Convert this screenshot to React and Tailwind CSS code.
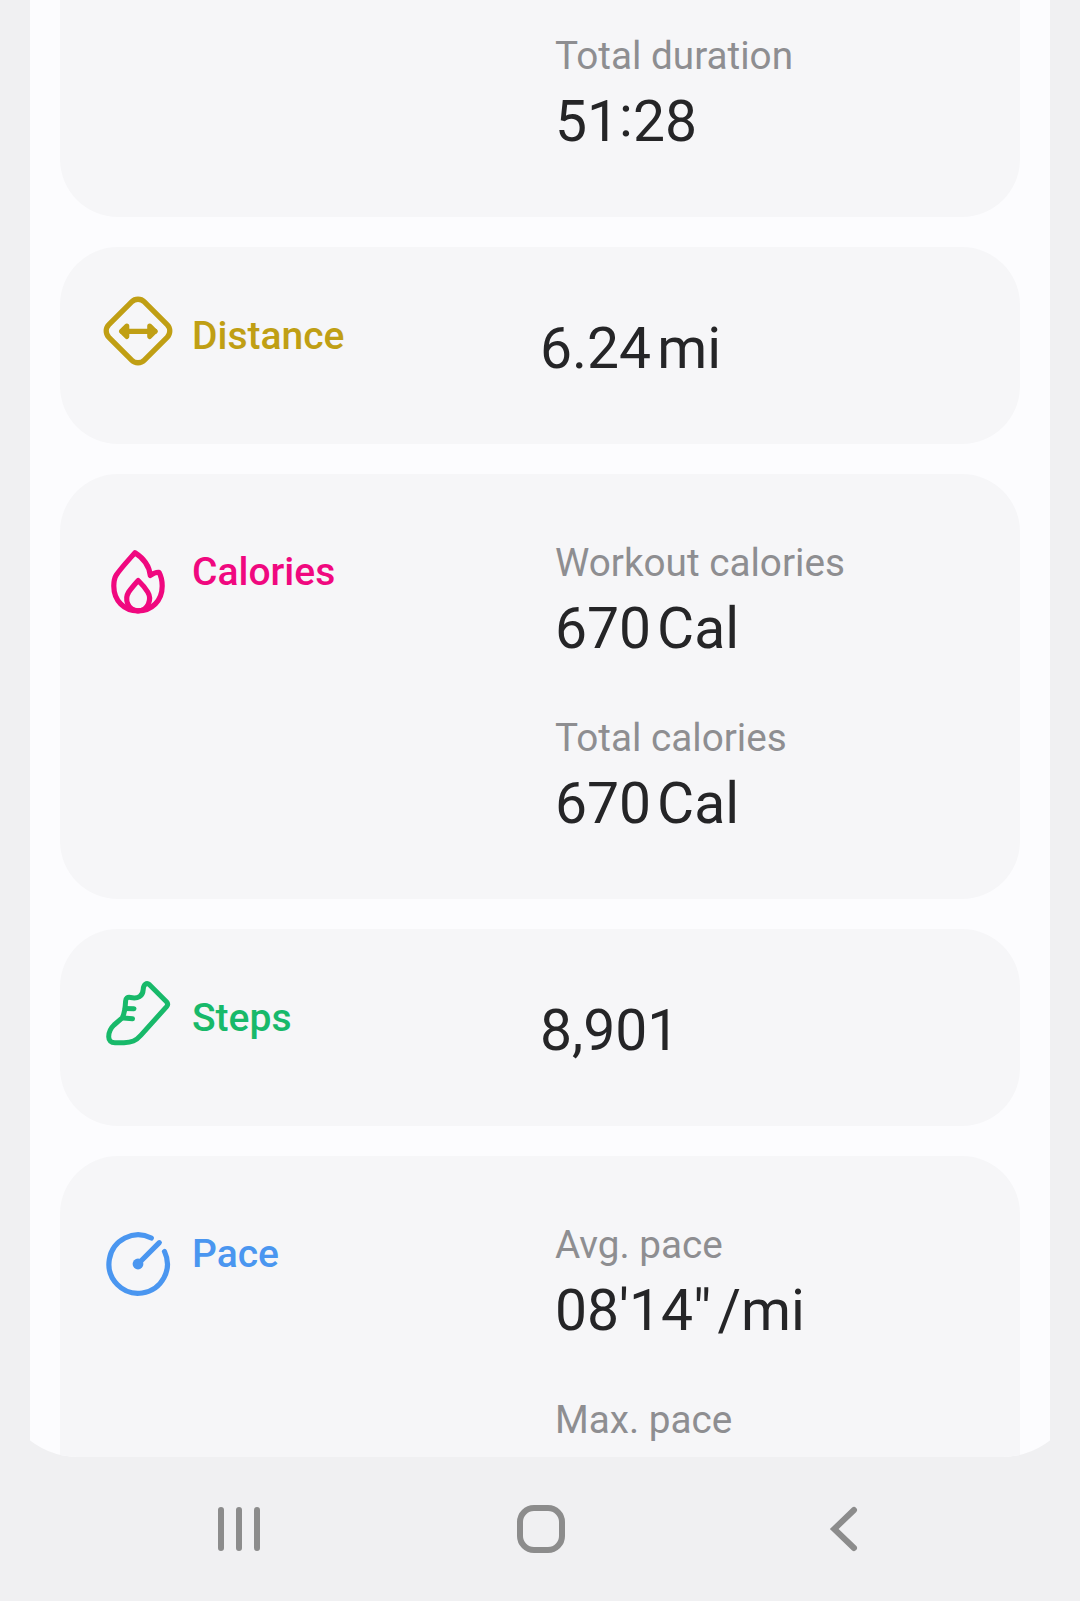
import React from 'react';

const iconProps = {
  viewBox: '0 0 72 72',
  fill: 'none',
  stroke: 'currentColor',
  strokeWidth: 5.3,
  strokeLinecap: 'round',
  strokeLinejoin: 'round',
  className: 'w-[72px] h-[72px] shrink-0',
};

const DistanceIcon = () => (
  <svg {...iconProps}>
    <rect x="10.9" y="10.9" width="50.2" height="50.2" rx="9" transform="rotate(45 36 36)" />
    <path d="M20 36.3H53" />
    <path d="M24.8 31L19.5 36.3L24.8 41.5ZM47.7 31L53 36.3L47.7 41.5Z" fill="currentColor" strokeWidth="5" />
  </svg>
);

const CaloriesIcon = () => (
  <svg {...iconProps} strokeWidth={5.2}>
    <path d="M33 6.7C27 13.5 19 22 14.3 29C12.4 32 11.8 35.5 11.8 40C11.8 54.5 22 64.8 36 64.8C50 64.8 60.2 54.5 60.2 40C60.2 35 59.2 30.3 57 26.3C54 26 51 27.5 48.3 29.5C47.3 19.5 40.5 11.5 33 6.7Z" />
    <path d="M36.2 34.5C33 38 29.5 42 26.7 46C22.3 53 25.5 64.8 36 64.8C46.5 64.8 50 53 45.7 46C43 41.5 39.6 37.8 36.2 34.5Z" />
  </svg>
);

const StepsIcon = () => (
  <svg {...iconProps} strokeWidth={5}>
    <g transform="translate(0 0.7)">
      <path d="M47.5 7L64.5 24C66 25.6 66 27.2 64.6 28.9L39 57.5C34 63.3 29.5 64.7 22 65H13C9 65 6.7 62.8 6.7 59C6.7 54.5 8.6 50.5 12 47.3L20.2 40.2C22 37 23.3 29.5 23.6 23.5C23.7 20.5 25.3 19.2 28.5 19.8C36 21.2 40.8 18.8 41.2 11.8C41.4 6.8 44.6 4.4 47.5 7Z" />
      <path d="M23.3 30.7L32 31M21.5 40.3L30.5 41" />
    </g>
  </svg>
);

const PaceIcon = () => (
  <svg {...iconProps} strokeWidth={5.2}>
    <path d="M49.3 10A29.2 29.2 0 1 0 62.5 23.5" />
    <path d="M36 36L57.3 14.7" />
    <circle cx="36" cy="36" r="5.4" fill="currentColor" stroke="none" />
  </svg>
);

const Value = ({ value, unit }) => (
  <div className="flex h-[68px] gap-[6px] text-[57px] leading-[68px] text-[#252527]">
    <span>{value}</span>
    {unit && <span>{unit}</span>}
  </div>
);

const Metric = ({ label, value, unit }) => (
  <div>
    <div className="mb-[9px] text-[38.7px] leading-[46px] text-[#8e8e91]">{label}</div>
    {value && <Value value={value} unit={unit} />}
  </div>
);

// the colon is lifted to the middle of the digits
const Duration = ({ minutes, seconds }) => (
  <>
    {minutes}
    <span className="inline-block -translate-y-[5px]">:</span>
    {seconds}
  </>
);

const SimpleCard = ({ icon, title, color, value, unit }) => (
  <section className="flex h-[197px] rounded-[58px] bg-[#f6f6f8] pl-[42px]">
    <div className={`flex w-[438px] gap-[18px] pt-12 ${color}`}>
      {icon}
      <h2 className="pt-[18px] text-[39px] leading-[46px] font-medium">{title}</h2>
    </div>
    <div className="pt-[68px]">
      <Value value={value} unit={unit} />
    </div>
  </section>
);

const DetailCard = ({ icon, title, color, metrics }) => (
  <section className="flex h-[425px] shrink-0 rounded-[58px] bg-[#f6f6f8] pl-[42px]">
    <div className={`flex w-[453px] gap-[18px] pt-[72px] ${color}`}>
      {icon}
      <h2 className="pt-[3px] text-[39px] leading-[46px] font-medium">{title}</h2>
    </div>
    <div className="flex flex-col gap-[52px] pt-[66px]">
      {metrics.map((metric) => (
        <Metric key={metric.label} {...metric} />
      ))}
    </div>
  </section>
);

const NavigationBar = () => (
  <nav className="flex h-[144px] items-center justify-between px-[203px] text-[#8c8c8c]">
    <svg viewBox="0 0 72 72" className="h-[72px] w-[72px]" fill="none" stroke="currentColor" strokeWidth="6" strokeLinecap="round">
      <path d="M18 17V55M36 17V55M54 17V55" />
    </svg>
    <svg viewBox="0 0 72 72" className="h-[72px] w-[72px]" fill="none" stroke="currentColor" strokeWidth="6">
      <rect x="16" y="15" width="42" height="42" rx="14" />
    </svg>
    <svg viewBox="0 0 72 72" className="h-[72px] w-[72px]" fill="none" stroke="currentColor" strokeWidth="6" strokeLinecap="round">
      <path d="M49 17L29.2 36L49 55" />
    </svg>
  </nav>
);

export default function App() {
  return (
    <div className="h-[1601px] w-[1080px] overflow-hidden bg-[#f0f0f2] font-['Roboto',sans-serif]">
      <div className="h-[1457px] overflow-hidden rounded-b-[78px] px-[30px]">
        <main className="flex flex-col gap-[30px] bg-[#fcfcfe] px-[30px]">
          <section className="h-[217px] rounded-b-[58px] bg-[#f6f6f8] pt-[33px] pl-[495px]">
            <Metric label="Total duration" value={<Duration minutes="51" seconds="28" />} />
          </section>
          <SimpleCard icon={<DistanceIcon />} title="Distance" color="text-[#c09f14]" value="6.24" unit="mi" />
          <DetailCard
            icon={<CaloriesIcon />}
            title="Calories"
            color="text-[#f0087f]"
            metrics={[
              { label: 'Workout calories', value: '670', unit: 'Cal' },
              { label: 'Total calories', value: '670', unit: 'Cal' },
            ]}
          />
          <SimpleCard icon={<StepsIcon />} title="Steps" color="text-[#18b96a]" value="8,901" />
          <DetailCard
            icon={<PaceIcon />}
            title="Pace"
            color="text-[#4a96f0]"
            metrics={[
              { label: 'Avg. pace', value: `08'14"`, unit: '/mi' },
              { label: 'Max. pace' },
            ]}
          />
        </main>
      </div>
      <NavigationBar />
    </div>
  );
}
